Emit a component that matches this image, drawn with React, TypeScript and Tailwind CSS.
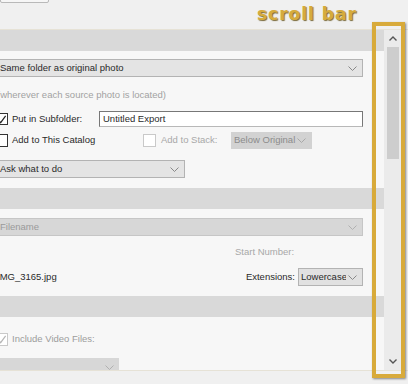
import React from "react";

const font = { fontFamily: '"Liberation Sans", Arial, sans-serif' };

function Chevron({ color = "#888" }: { color?: string }) {
  return (
    <svg width="9" height="5" viewBox="0 0 9 5" className="shrink-0">
      <polyline points="0.5,0.5 4.5,4.5 8.5,0.5" fill="none" stroke={color} strokeWidth="1" />
    </svg>
  );
}

function Check({ color = "#222" }: { color?: string }) {
  return (
    <svg width="11" height="11" viewBox="0 0 11 11">
      <polyline points="1.5,6 4,9 9.5,1.5" fill="none" stroke={color} strokeWidth="1.3" />
    </svg>
  );
}

function Band() {
  return <div className="h-[21px] bg-[#d9d9d9] w-full" />;
}

export default function App() {
  return (
    <div
      className="relative w-[408px] h-[384px] overflow-hidden bg-[#f0f0f0] text-[9.5px] text-[#2a2a2a] whitespace-nowrap"
      style={font}
    >
      {/* top strip with the edge of a button */}
      <div className="h-[31px] border-b border-[#e6e2d6]">
        <div className="w-[49px] h-[4px] -mt-[1px] bg-[#f6f6f6] border border-[#b9b9b9] rounded-b-[2px]" />
      </div>

      <div className="flex h-[340px]">
        {/* panel content */}
        <div className="w-[384px] bg-[#f7f7f7] overflow-hidden">
          <Band />
          <div className="-ml-[4px] pr-[21px] w-[388px]">
            <div className="mt-[8px] h-[18px] flex items-center justify-between bg-[#e4e4e4] border border-[#b3b3b3] pl-[3px] pr-[5px]">
              <span>Same folder as original photo</span>
              <Chevron />
            </div>
            <div className="h-[12px] mt-[12px] flex items-center pl-[1px] text-[#a2a2a2]">
              (wherever each source photo is located)
            </div>

            <div className="mt-[10px] h-[16px] flex items-center">
              <div className="w-[12px] h-[12px] bg-white border border-[#333] flex items-center justify-center">
                <Check />
              </div>
              <span className="ml-[4px] w-[87px]">Put in Subfolder:</span>
              <div className="flex-1 h-[16px] bg-white border border-[#777] border-b-[#b8b8b8] flex items-center pl-[3px]">
                Untitled Export
              </div>
            </div>

            <div className="mt-[5px] h-[17px] flex items-center">
              <div className="w-[12px] h-[13px] bg-white border border-[#333]" />
              <span className="ml-[4px] w-[131px]">Add to This Catalog</span>
              <div className="w-[13px] h-[13px] bg-white border border-[#c9c9c9]" />
              <span className="ml-[5px] w-[70px] text-[#a8a8a8]">Add to Stack:</span>
              <div className="w-[81px] h-[17px] bg-[#d2d2d2] flex items-center justify-between pl-[3px] pr-[6px] text-[#8c8c8c]">
                <span>Below Original</span>
                <Chevron color="#a8a8a8" />
              </div>
            </div>

            <div className="mt-[11px] w-[189px] h-[18px] flex items-center justify-between bg-[#e4e4e4] border border-[#b3b3b3] pl-[3px] pr-[5px]">
              <span>Ask what to do</span>
              <Chevron />
            </div>
          </div>

          <div className="mt-[10px]">
            <Band />
          </div>

          <div className="-ml-[4px] pr-[21px] w-[388px]">
            <div className="mt-[9px] h-[18px] flex items-center justify-between bg-[#d7d7d7] border border-[#c6c6c6] pl-[3px] pr-[5px] text-[#9a9a9a]">
              <span>Filename</span>
              <Chevron color="#b0b0b0" />
            </div>
            <div className="mt-[10px] h-[12px] flex items-center">
              <span className="ml-[239px] text-[#a8a8a8]">Start Number:</span>
            </div>
            <div className="mt-[10px] h-[18px] flex items-center">
              <span className="flex-1 pl-[1px]">IMG_3165.jpg</span>
              <span className="mr-[3px]">Extensions:</span>
              <div className="w-[65px] h-[18px] flex items-center justify-between bg-[#e1e1e1] border border-[#b3b3b3] pl-[2px] pr-[5px] overflow-hidden">
                <span className="w-[45px] overflow-hidden">Lowercase</span>
                <Chevron />
              </div>
            </div>
          </div>

          <div className="mt-[10px]">
            <Band />
          </div>

          <div className="-ml-[4px] w-[388px]">
            <div className="mt-[15px] h-[14px] flex items-center">
              <div className="w-[12px] h-[13px] bg-white border border-[#c9c9c9] flex items-center justify-center">
                <Check color="#b5b5b5" />
              </div>
              <span className="ml-[4px] text-[#9c9c9c]">Include Video Files:</span>
            </div>
            <div className="mt-[12px] w-[123px] h-[18px] flex items-center justify-end bg-[#d7d7d7] pr-[5px]">
              <Chevron color="#b0b0b0" />
            </div>
          </div>
        </div>

        {/* scroll bar */}
        <div className="w-[17px] bg-[#ebebeb] flex flex-col items-center">
          <div className="h-[17px] w-full flex items-center justify-center">
            <svg width="8" height="5" viewBox="0 0 8 5">
              <polyline points="0.5,4.5 4,1 7.5,4.5" fill="none" stroke="#555" strokeWidth="1.4" />
            </svg>
          </div>
          <div className="w-[12px] h-[112px] bg-[#cdcdcd]" />
          <div className="flex-1" />
          <div className="h-[17px] w-full flex items-center justify-center">
            <svg width="8" height="5" viewBox="0 0 8 5">
              <polyline points="0.5,0.5 4,4 7.5,0.5" fill="none" stroke="#555" strokeWidth="1.4" />
            </svg>
          </div>
        </div>
        <div className="flex-1 bg-[#f0f0f0]" />
      </div>

      <div className="border-t border-[#e6e2d6] h-[13px]" />

      {/* annotation */}
      <div
        className="absolute left-[257px] top-[2px] text-[17px] font-bold tracking-[1px] text-[#d6ab3c] [text-shadow:1px_1px_1px_#7a6a3a]"
        style={{ fontFamily: '"DejaVu Sans", sans-serif' }}
      >
        scroll bar
      </div>
      <div className="absolute left-[372px] top-[22px] w-[33px] h-[356px] border-[4px] border-[#d8aa3a] shadow-[1px_1px_2px_rgba(0,0,0,0.45)]" />
    </div>
  );
}
